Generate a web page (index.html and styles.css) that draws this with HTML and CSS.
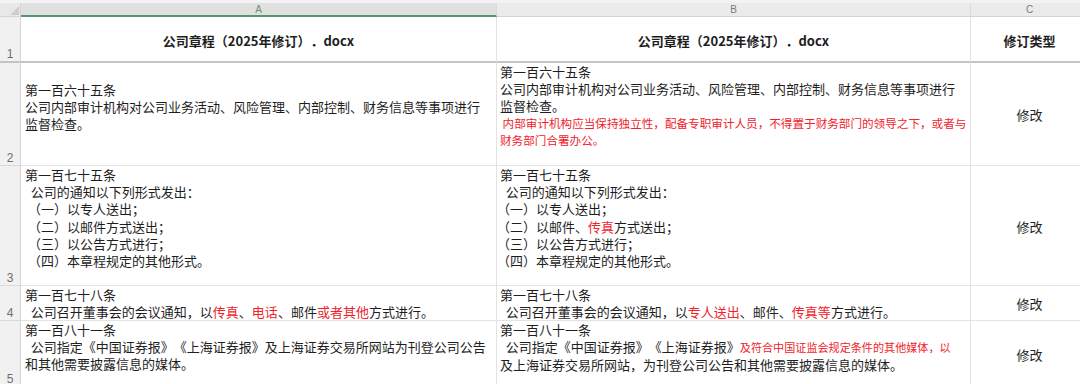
FILE: index.html
```html
<!DOCTYPE html>
<html lang="zh-CN">
<head>
<meta charset="utf-8">
<title>公司章程修订对照</title>
<link rel="stylesheet" href="styles.css">
</head>
<body>
<div class="strip"></div>
<div class="sheet">
  <div class="corner"><svg width="9" height="9" viewBox="0 0 9 9"><polygon points="9,0 9,9 0,9" fill="#cfcfcf"/></svg></div>
  <div class="colhead sel">A</div>
  <div class="colhead">B</div>
  <div class="colhead">C</div>

  <div class="rowhead r1">1</div>
  <div class="cell r1 title">公司章程（2025年修订）．docx</div>
  <div class="cell r1 title">公司章程（2025年修订）．docx</div>
  <div class="cell r1 title">修订类型</div>

  <div class="rowhead">2</div>
  <div class="cell txt offset">
    <div class="l">第一百六十五条</div>
    <div class="l">公司内部审计机构对公司业务活动、风险管理、内部控制、财务信息等事项进行</div>
    <div class="l">监督检查。</div>
  </div>
  <div class="cell txt colb">
    <div class="l">第一百六十五条</div>
    <div class="l">公司内部审计机构对公司业务活动、风险管理、内部控制、财务信息等事项进行</div>
    <div class="l">监督检查。</div>
    <div class="l red small"> 内部审计机构应当保持独立性，配备专职审计人员，不得置于财务部门的领导之下，或者与</div>
    <div class="l red small">财务部门合署办公。</div>
  </div>
  <div class="cell type">修改</div>

  <div class="rowhead">3</div>
  <div class="cell txt">
    <div class="l">第一百七十五条</div>
    <div class="l">  公司的通知以下列形式发出：</div>
    <div class="l"> （一）以专人送出；</div>
    <div class="l"> （二）以邮件方式送出；</div>
    <div class="l"> （三）以公告方式进行；</div>
    <div class="l"> （四）本章程规定的其他形式。</div>
  </div>
  <div class="cell txt colb">
    <div class="l">第一百七十五条</div>
    <div class="l">  公司的通知以下列形式发出：</div>
    <div class="l"><span class="paren">（一）以专人送出；</span></div>
    <div class="l"><span class="paren">（二）以邮件、<span class="red">传真</span>方式送出；</span></div>
    <div class="l"><span class="paren">（三）以公告方式进行；</span></div>
    <div class="l"><span class="paren">（四）本章程规定的其他形式。</span></div>
  </div>
  <div class="cell type">修改</div>

  <div class="rowhead">4</div>
  <div class="cell txt">
    <div class="l">第一百七十八条</div>
    <div class="l">  公司召开董事会的会议通知，以<span class="red">传真</span>、<span class="red">电话</span>、邮件<span class="red">或者其他</span>方式进行。</div>
  </div>
  <div class="cell txt colb">
    <div class="l">第一百七十八条</div>
    <div class="l">  公司召开董事会的会议通知，以<span class="red">专人送出</span>、邮件、<span class="red">传真等</span>方式进行。</div>
  </div>
  <div class="cell type">修改</div>

  <div class="rowhead">5</div>
  <div class="cell txt">
    <div class="l">第一百八十一条</div>
    <div class="l">  公司指定《中国证券报》《上海证券报》及上海证券交易所网站为刊登公司公告</div>
    <div class="l">和其他需要披露信息的媒体。</div>
  </div>
  <div class="cell txt colb">
    <div class="l">第一百八十一条</div>
    <div class="l">  公司指定《中国证券报》《上海证券报》<span class="red smaller">及符合中国证监会规定条件的其他媒体，以</span></div>
    <div class="l">及上海证券交易所网站，为刊登公司公告和其他需要披露信息的媒体。</div>
  </div>
  <div class="cell type">修改</div>
</div>
</body>
</html>
```

FILE: styles.css
```css
* { box-sizing: border-box; }
html, body {
  margin: 0;
  padding: 0;
  background: #ffffff;
  overflow: hidden;
}
body {
  width: 1080px;
  height: 384px;
  font-family: "Noto Sans CJK SC", "Liberation Sans", sans-serif;
  color: #1e1e1e;
  text-spacing-trim: space-all;
}
.strip {
  height: 3px;
  background: #f3f3f3;
}
.sheet {
  display: grid;
  grid-template-columns: 21px 476px 474px 118px;
  grid-template-rows: 14px 46px 103px 120px 35px 66px;
  width: 1089px;
}
.corner {
  background: #e8e8e8;
  border-right: 1px solid #d4d4d4;
  border-bottom: 1px solid #d4d4d4;
  display: flex;
  align-items: flex-end;
  justify-content: flex-end;
  padding: 0 1px 1px 0;
}
.corner svg { display: block; }
.colhead {
  background: #ebebeb;
  border-right: 1px solid #dadada;
  border-bottom: 1px solid #d4d4d4;
  font-family: "Liberation Sans", sans-serif;
  font-size: 10px;
  line-height: 13px;
  color: #7a7a7a;
  text-align: center;
}
.colhead.sel {
  background: #e0e0e0;
  color: #6b8f78;
  border-bottom: 2px solid #4f9a6b;
}
.rowhead {
  background: #f1f1f1;
  border-right: 1px solid #d6d6d6;
  border-bottom: 1px solid #dadada;
  font-family: "Liberation Sans", sans-serif;
  font-size: 12px;
  line-height: 14px;
  color: #6e6e6e;
  display: flex;
  align-items: flex-end;
  justify-content: center;
}
.rowhead.r1 {
  border-bottom: 2px solid #c4c4c4;
}
.cell {
  border-right: 1px solid #e3e3e3;
  border-bottom: 1px solid #e3e3e3;
  font-size: 13px;
  line-height: 17.2px;
}
.cell.r1 {
  border-bottom: 2px solid #c4c4c4;
}
.title {
  font-weight: bold;
  display: flex;
  align-items: center;
  justify-content: center;
  padding-top: 4px;
  white-space: nowrap;
}
.txt {
  padding: 0 0 0 4px;
}
.txt.colb {
  padding-left: 3px;
}
.txt.offset {
  padding-top: 18px;
}
.l {
  white-space: pre;
}
.red { color: #f0222a; }
.small { font-size: 11.6px; line-height: 17.5px; }
.smaller { font-size: 11.1px; }
.paren { margin-left: -3px; }
.type {
  display: flex;
  align-items: center;
  justify-content: center;
  padding-top: 2px;
}
```
